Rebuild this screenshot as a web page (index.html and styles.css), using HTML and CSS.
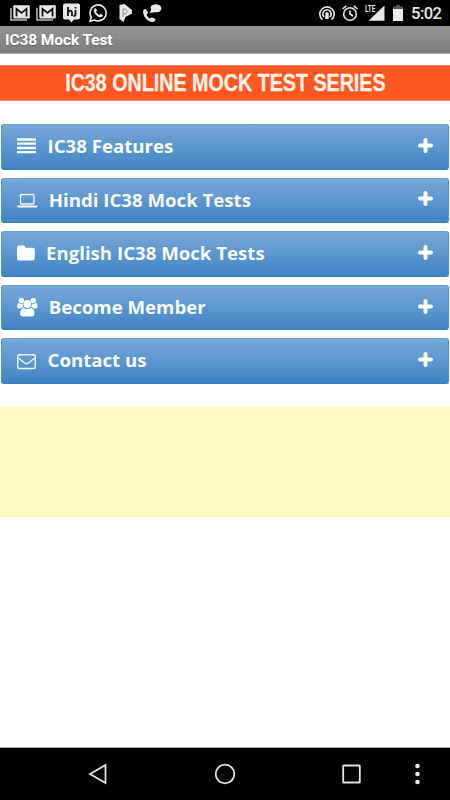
FILE: index.html
```html
<!DOCTYPE html>
<html lang="en">
<head>
<meta charset="utf-8">
<title>IC38 Mock Test</title>
<link rel="stylesheet" href="styles.css">
</head>
<body>
<div class="status">
  <div class="notices">
    <svg viewBox="0 0 26 26"><path d="M4 8v12h16" class="line dim"/><rect x="6.3" y="5.2" width="16.5" height="13.2" rx="1" class="fill"/><path d="M9.500 16.500V8.800l5 4.100 5-4.100v7.700" class="cut"/></svg>
    <svg viewBox="0 0 26 26"><path d="M4 8v12h16" class="line dim"/><rect x="6.3" y="5.2" width="16.5" height="13.2" rx="1" class="fill"/><path d="M9.500 16.500V8.800l5 4.100 5-4.100v7.700" class="cut"/></svg>
    <svg viewBox="0 0 26 26"><path d="M6 3.500h13q2 0 2 2V17.500q0 2-2 2h-4l-2.500 3-2.500-3H6q-2 0-2-2V5.500q0-2 2-2z" class="fill"/><path d="M9 7v9M9 12q4-3 4 1v3M16.500 10v4q0 2-2 2M16.500 7v1.400" class="cut"/></svg>
    <svg viewBox="0 0 26 26"><path d="M5 21.300l1.300-4.100a8 8 0 1 1 3 2.800z" class="line"/><path d="M9.600 8.500q1.200-.8 1.800.7l.6 1.500-1 1.300q1.100 2.200 3.400 3l1.300-1.300 2.200 1.200q.4 1.500-1.500 2.200-3 .6-6-2.700-3-3.800-.8-5.900z" class="fill"/></svg>
    <svg viewBox="0 0 26 26"><path d="M7.500 5l5-1 7.500 6v3.500l-6.500 3.500-2 5-4-3z" class="fill"/><path d="M11 9v8M11 9h2.500l2 2.500-2 2.500H11" class="cut thin"/></svg>
    <svg viewBox="0 0 26 26"><path d="M8 9q-3 0-3 3 1 8 9 10 3.500 0 3.500-3l-3.700-1.800-2 1.200q-2.500-1.500-3.300-4l1.600-1.600z" class="fill"/><path d="M12 13l1-3.500q-2-5 5-5.300 5.500.3 5.400 4.500-.8 4-6.400 3.600z" class="fill"/></svg>
  </div>
  <div class="system">
    <svg class="spot" viewBox="0 0 18 18"><path d="M4.500 15.700a7.200 7.200 0 1 1 9 0M6.300 13.200a4.200 4.200 0 1 1 5.400 0" class="line"/><path d="M7.300 9.800a1.700 1.700 0 0 1 3.400 0v5.200H7.300z" class="fill"/></svg>
    <svg class="alarm" viewBox="0 0 18 18"><circle cx="9" cy="10" r="6.300" class="line"/><path d="M1.500 5l3.700-3.200M16.500 5l-3.700-3.200M9 6.500V10l2.800 2" class="line"/></svg>
    <svg class="signal" viewBox="0 0 20 18"><path d="M19.500 1.500v15.300H3.500z" class="fill"/><path d="M0 0h11v8.800H0z" class="black"/><text x="0" y="8.3" textLength="10.3" lengthAdjust="spacingAndGlyphs" class="lte">LTE</text></svg>
    <svg class="battery" viewBox="0 0 10 16"><path d="M3 0h4v1.500h3v2.500H0V1.500h3z" class="empty"/><path d="M0 4h10v12H0z" class="fill"/></svg>
    <span class="clock">5:02</span>
  </div>
</div>
<header class="title">IC38 Mock Test</header>
<main>
  <h1 class="banner"><span>IC38 ONLINE MOCK TEST SERIES</span></h1>
  <div class="menu">
    <div class="item">
      <svg class="icon" viewBox="0 0 21 20"><path d="M0 3.500h19M0 7.700h19M0 12h19M0 16.200h19" class="bars"/></svg>
      <span class="label features">IC38 Features</span>
      <svg class="plus" viewBox="0 0 15 15"><path d="M7.500 2v11M2 7.500h11"/></svg>
    </div>
    <div class="item">
      <svg class="icon" viewBox="0 0 21 20"><rect x="3.500" y="4.500" width="13.500" height="9.500" rx="1" class="thin-line"/><path d="M0 15.500h20.500v1q-.5 1-2 1H2q-1.500 0-2-1z" class="solid"/></svg>
      <span class="label hindi">Hindi IC38 Mock Tests</span>
      <svg class="plus" viewBox="0 0 15 15"><path d="M7.500 2v11M2 7.500h11"/></svg>
    </div>
    <div class="item">
      <svg class="icon" viewBox="0 0 21 20"><path d="M2 2.500h4.500q2 0 2 2v.3h7.300q2 0 2 2V15.500q0 2-2 2H2q-2 0-2-2v-11q0-2 2-2z" class="solid"/></svg>
      <span class="label english">English IC38 Mock Tests</span>
      <svg class="plus" viewBox="0 0 15 15"><path d="M7.500 2v11M2 7.500h11"/></svg>
    </div>
    <div class="item">
      <svg class="icon" viewBox="0 0 21 20"><circle cx="4.300" cy="3.500" r="2.700" class="solid"/><circle cx="16.300" cy="3.500" r="2.700" class="solid"/><path d="M.2 10.500V7.500q.3-1.700 1.500-1.500 2.500 1.500 4 .5Q5.500 9 6.800 10.500H4.700L3.500 11.500H1.500Q.2 11.500.2 10.500zM20.400 10.500V7.500q-.3-1.700-1.500-1.500-2.500 1.500-4 .5Q15.100 9 13.800 10.500h2.100l1.200 1h2q1.300 0 1.300-1z" class="solid"/><circle cx="10.300" cy="7" r="3.900" class="solid"/><path d="M6.500 11q3.800 2 7.600 0 3.300.4 3.400 5.500 0 3-2.800 3H6q-2.900 0-2.900-3 .1-5 3.400-5.500z" class="solid"/></svg>
      <span class="label member">Become Member</span>
      <svg class="plus" viewBox="0 0 15 15"><path d="M7.500 2v11M2 7.500h11"/></svg>
    </div>
    <div class="item">
      <svg class="icon" viewBox="0 0 21 20"><rect x=".7" y="3.700" width="17.600" height="13.800" rx="1.500" class="thin-line"/><path d="M.8 6.500l7 5.700q1.700 1.100 3.400 0l7-5.700" class="thin-line"/></svg>
      <span class="label contact">Contact us</span>
      <svg class="plus" viewBox="0 0 15 15"><path d="M7.500 2v11M2 7.500h11"/></svg>
    </div>
  </div>
  <div class="notice-box"></div>
</main>
<nav class="navbar">
  <svg class="back" viewBox="0 0 24 24"><path d="M19.500 3v18L4 12z"/></svg>
  <svg class="home" viewBox="0 0 24 24"><circle cx="12" cy="12" r="9.300"/></svg>
  <svg class="recent" viewBox="0 0 24 24"><rect x="4.200" y="3.500" width="16.600" height="17" rx=".6"/></svg>
  <svg class="more" viewBox="0 0 24 24"><g class="dots"><circle cx="12.500" cy="4" r="2.300"/><circle cx="12.500" cy="12" r="2.300"/><circle cx="12.500" cy="20" r="2.300"/></g></svg>
</nav>
</body>
</html>
```
FILE: styles.css
```css
* { box-sizing: border-box; }
body {
  margin: 0;
  width: 450px;
  height: 800px;
  display: flex;
  flex-direction: column;
  background: #fff;
  overflow: hidden;
}
svg { display: block; flex: none; }
.status {
  height: 26px;
  background: #000;
  display: flex;
  justify-content: space-between;
  padding: 0 9px 0 7px;
}
.notices, .system { display: flex; align-items: center; }
.notices svg { width: 26px; height: 26px; }
.notices svg:nth-child(n+3) { margin-right: .3px; }
.fill, .dots { fill: #e8e8e8; stroke: none; }
.line { fill: none; stroke: #e8e8e8; stroke-width: 1.6; }
.dim { stroke: #bbb; }
.cut { fill: none; stroke: #111; stroke-width: 1.8; }
.thin { stroke: #888; stroke-width: 1; }
.black { fill: #000; }
.empty { fill: #555; }
.spot, .alarm { width: 18px; height: 18px; }
.alarm { margin: 0 6px 0 5px; }
.signal { width: 20px; height: 18px; }
.lte { font: bold 9.500px Roboto, sans-serif; fill: #e8e8e8; }
.battery { width: 10px; height: 16px; margin: 0 8px; }
.clock {
  width: 30px;
  font: 500 16.500px/26px Roboto, sans-serif;
  letter-spacing: -.5px;
  color: #e8e8e8;
  padding-top: 2px;
  white-space: nowrap;
}
.title {
  height: 28px;
  padding: 1px 0 0 5px;
  background: linear-gradient(#969696, #7c7c7c);
  border-bottom: 1px solid #a8a8a8;
  font: bold 15.500px/26px Roboto, sans-serif;
  letter-spacing: -.1px;
  color: #fff;
  text-shadow: 0 1px 1px #666;
}
main { flex: 1; padding-top: 11px; }
.banner {
  height: 36px;
  margin: 0;
  background: #ff5722;
  border: solid #f98b68;
  border-width: 1px 0;
  color: #fff3e8;
  font: bold 24px/33px "Liberation Sans", sans-serif;
  text-align: center;
  white-space: nowrap;
}
.banner span {
  display: inline-block;
  transform: scaleX(.82);
  margin: 0 -60px;
  -webkit-text-stroke: .3px #fff3e8;
}
.menu {
  display: flex;
  flex-direction: column;
  gap: 8px;
  padding: 23px 1px 0;
}
.item {
  height: 45.600px;
  display: flex;
  align-items: center;
  padding: 0 15px;
  border: 1px solid #4f8fca;
  border-top-color: #6ba0d2;
  border-bottom-color: #3a7fbd;
  border-radius: 3px;
  background: linear-gradient(#77a9d9, #3f84c5);
}
.icon { width: 21px; height: 20px; margin-bottom: 1px; }
.label {
  flex: 1;
  margin: 0 0 1.500px 9.500px;
  font: bold 18.650px/26px "Open Sans", sans-serif;
  color: #f8fdff;
  white-space: nowrap;
}
.hindi, .member { margin-left: 10.700px; }
.english { margin-left: 8px; }
.plus { width: 15px; height: 15px; margin-bottom: 3px; }
.plus path { stroke: #fff; stroke-width: 4; stroke-linecap: round; }
.bars { stroke: #f8fdff; stroke-width: 2.300; }
.thin-line { fill: none; stroke: #eef8ff; stroke-width: 1.400; }
.solid { fill: #f8fdff; }
.notice-box { height: 110px; margin-top: 23px; background: #fff8c1; }
.navbar {
  height: 53px;
  border-top: 1px solid #aaa;
  background: #000;
  display: flex;
  align-items: center;
  padding: 0 21px 0 86px;
}
.navbar svg { width: 24px; height: 24px; fill: none; stroke: #e4e4e4; stroke-width: 1.800; }
.navbar .dots { stroke: none; }
.home { margin-left: 103px; }
.recent { margin-left: 102px; }
.more { margin-left: 42px; }
```
